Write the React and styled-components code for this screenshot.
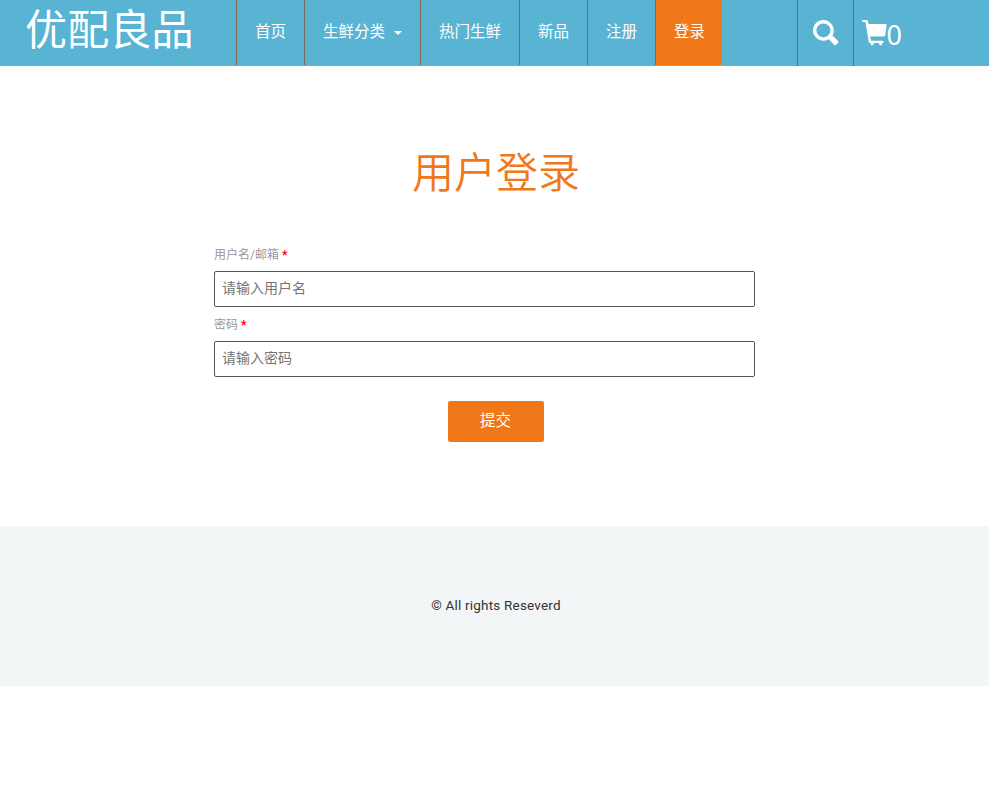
import React from "react";
import styled, { createGlobalStyle } from "styled-components";

const GlobalStyle = createGlobalStyle`
  *, *::before, *::after { box-sizing: border-box; }
  body {
    margin: 0;
    background: #fff;
    font-family: Roboto, "Noto Sans CJK SC", sans-serif;
    font-size: 14px;
  }
`;

const Header = styled.header`
  display: flex;
  height: 66px;
  background: #59b4d3;
  color: #fff;
`;

const Brand = styled.a`
  width: 236px;
  flex: none;
  padding-left: 25px;
  font-size: 42px;
  font-weight: 400;
  line-height: 62px;
  letter-spacing: 0.2px;
  white-space: nowrap;
`;

const Nav = styled.nav`
  display: flex;
  width: 561px;
  flex: none;
  height: 65px;
`;

const NavItem = styled.a`
  display: flex;
  align-items: center;
  height: 65px;
  padding: 0 ${(p) => (p.$active ? 17 : 18)}px 5px 18px;
  border-left: 1px solid #7b6a58;
  background: ${(p) => (p.$active ? "#f07818" : "transparent")};
  font-size: 15.5px;
  white-space: nowrap;
`;

const Caret = styled.span`
  margin: 5px 0 0 9px;
  border: 4px solid transparent;
  border-top-color: #fff;
  border-bottom: 0;
`;

const SearchLink = styled.a`
  width: 56px;
  padding: 20px 0 0 15px;
  border-left: 1px solid #6e7068;
`;

const CartLink = styled.a`
  display: flex;
  padding: 20px 0 0 8px;
  border-left: 1px solid #6e7068;
`;

const Icon = styled.svg`
  display: block;
  flex: none;
  fill: #fff;
`;

const CartCount = styled.span`
  font-family: "Noto Sans", sans-serif;
  font-size: 27px;
  font-weight: 400;
  line-height: 29px;
  margin-left: -0.5px;
`;

const Main = styled.main`
  height: 460px;
  padding-top: 74px;
`;

const Title = styled.h1`
  margin: 0 0 41px 3px;
  color: #f07818;
  font-family: "Noto Sans CJK SC", sans-serif;
  font-size: 42px;
  font-weight: 350;
  line-height: 60px;
  text-align: center;
`;

const Form = styled.form`
  display: flex;
  flex-direction: column;
  width: 541px;
  margin-left: 214px;
`;

const Label = styled.label`
  height: 30px;
  padding-top: 5px;
  color: #999;
  font-size: 12px;
  line-height: 19px;
`;

const Required = styled.span`
  margin-left: 3px;
  color: red;
  font-weight: 700;
`;

const Input = styled.input`
  height: 36px;
  margin-bottom: 4px;
  padding: 0 7px 4px;
  border: 1px solid #555;
  border-radius: 2px;
  background: #fff;
  font: 14px "Noto Sans CJK SC", sans-serif;
  &::placeholder { color: #757575; }
`;

const Submit = styled.button`
  width: 96px;
  height: 41px;
  margin: 20px 0 0 234px;
  padding: 0 1px 5px 0;
  border: 0;
  border-radius: 2px;
  background: #f07818;
  color: #fff;
  font: 15.5px "Noto Sans CJK SC", sans-serif;
`;

const Footer = styled.footer`
  display: flex;
  align-items: center;
  justify-content: center;
  height: 160px;
  padding: 0 0 2px 3px;
  background: #f2f6f7;
  color: #333;
  font-size: 13.5px;
  letter-spacing: 0.2px;
`;

const links = [
  { text: "首页" },
  { text: "生鲜分类", menu: true },
  { text: "热门生鲜" },
  { text: "新品" },
  { text: "注册" },
  { text: "登录", active: true },
];

const fields = [
  { id: "username", label: "用户名/邮箱", hint: "请输入用户名", type: "text" },
  { id: "password", label: "密码", hint: "请输入密码", type: "password" },
];

export default function App() {
  return (
    <>
      <GlobalStyle />
      <Header>
        <Brand>优配良品</Brand>
        <Nav>
          {links.map((l) => (
            <NavItem key={l.text} $active={l.active}>
              {l.text}
              {l.menu && <Caret />}
            </NavItem>
          ))}
        </Nav>
        <SearchLink aria-label="搜索">
          <Icon width="26" height="26" viewBox="0 0 26 26">
            <path
              fillRule="evenodd"
              d="M10.4 0a10.4 10.4 0 1 0 5.4 19.3l5.5 5.6q.8.7 1.6 0l2.2-2.2q.7-.8 0-1.6l-5.7-5.5A10.4 10.4 0 0 0 10.4 0Zm0 3.4a7 7 0 1 1 0 14a7 7 0 0 1 0-14Z"
            />
          </Icon>
        </SearchLink>
        <CartLink>
          <Icon width="25" height="26" viewBox="0 0 25 26">
            <path d="M1 0h3.7q.8 0 1 .8l.9 3.2h17q1.2 0 1.1 1l-1.5 10.2q-.2 1.2-1.4 1.2H8l1.2 4.4h11.4q1 0 1 1.1t-1 1.1h-.5v1q0 1.4-1.5 1.4t-1.5-1.4v-1h-5.4v1q0 1.4-1.5 1.4t-1.5-1.4v-1H7.9q-.9 0-1.1-1L3.4 2H1Q0 2 0 1t1-1Z" />
          </Icon>
          <CartCount>0</CartCount>
        </CartLink>
      </Header>
      <Main>
        <Title>用户登录</Title>
        <Form onSubmit={(e) => e.preventDefault()}>
          {fields.map((f) => (
            <React.Fragment key={f.id}>
              <Label htmlFor={f.id}>
                {f.label}
                <Required>*</Required>
              </Label>
              <Input id={f.id} type={f.type} placeholder={f.hint} />
            </React.Fragment>
          ))}
          <Submit>提交</Submit>
        </Form>
      </Main>
      <Footer>© All rights Reseverd</Footer>
    </>
  );
}
